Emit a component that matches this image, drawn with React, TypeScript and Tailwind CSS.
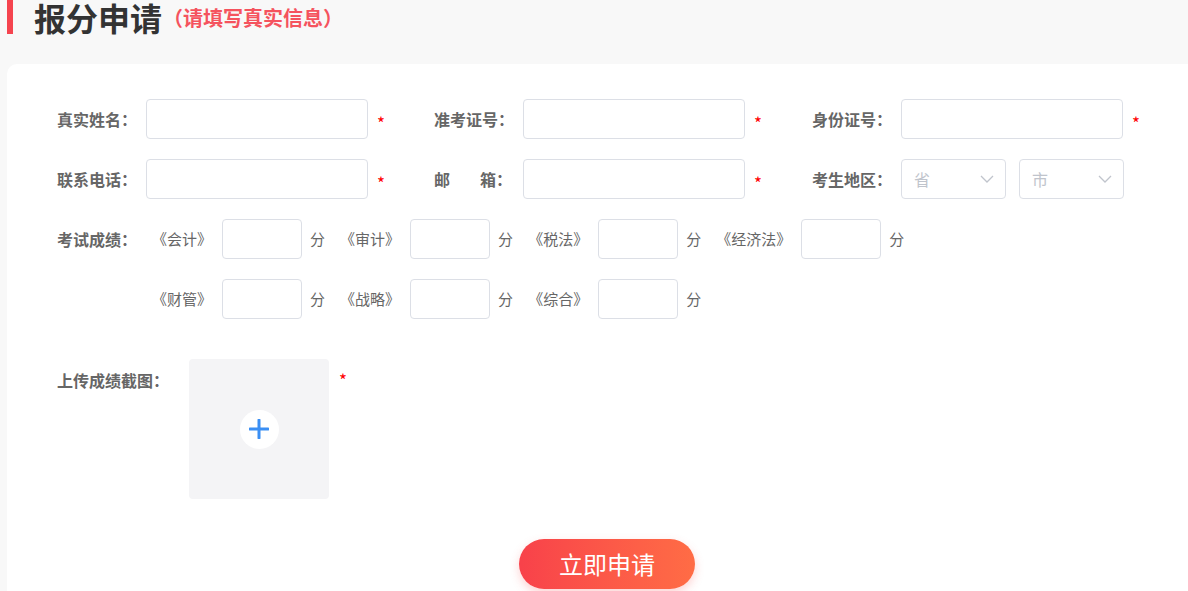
import React from "react";

const font = "font-['Noto_Sans_CJK_SC','Noto_Sans',sans-serif]";

function Label({ children, w = "w-[89px]" }: { children: React.ReactNode; w?: string }) {
  return <div className={`${w} shrink-0 text-[16px] font-bold leading-5 text-[#666]`}>{children}</div>;
}

function Box({ w }: { w: string }) {
  return (
    <input
      className={`${w} h-10 shrink-0 rounded border border-[#dcdfe6] bg-white px-3 text-[14px] outline-none`}
    />
  );
}

function Star({ ml = "ml-[9px]" }: { ml?: string }) {
  return <span className={`${ml} mt-[7px] text-[17px] leading-5 text-[#f00]`}>*</span>;
}

function Chevron() {
  return (
    <svg width="14" height="8" viewBox="0 0 14 8" fill="none">
      <path d="M1 1l6 6 6-6" stroke="#c0c4cc" strokeWidth="1.3" />
    </svg>
  );
}

function Select({ text, ml = "" }: { text: string; ml?: string }) {
  return (
    <div
      className={`${ml} flex h-10 w-[105px] shrink-0 items-center justify-between rounded border border-[#dcdfe6] bg-white pl-[12px] pr-[11px]`}
    >
      <span className="text-[16px] text-[#c0c4cc]">{text}</span>
      <Chevron />
    </div>
  );
}

function Score({ name }: { name: string }) {
  return (
    <div className="flex items-center">
      <span className="mr-[10px] text-[15px] text-[#666]">《{name}》</span>
      <Box w="w-[80px]" />
      <span className="ml-[8px] mr-[15px] text-[15px] text-[#666]">分</span>
    </div>
  );
}

export default function App() {
  return (
    <div className={`${font} h-[591px] w-full overflow-hidden bg-[#f8f8f8]`}>
      <div className="flex h-[34px] items-center pl-[7px]">
        <div className="h-[34px] w-[6px] bg-[#f5444f]" />
        <h1 className="ml-[21px] text-[32px] font-bold leading-[34px] text-[#333]">报分申请</h1>
        <span className="ml-[1px] mt-[2px] text-[20px] font-bold text-[#f5535e]">（请填写真实信息）</span>
      </div>

      <div className="ml-[7px] mt-[30px] w-[1200px] rounded-tl-[10px] rounded-tr-[10px] bg-white pl-[50px] pt-[35px] pb-10">
        <div className="flex flex-col gap-5">
          <div className="flex items-center">
            <div className="flex w-[377px] items-center">
              <Label>真实姓名：</Label>
              <Box w="w-[222px]" />
              <Star />
            </div>
            <div className="flex w-[378px] items-center">
              <Label>准考证号：</Label>
              <Box w="w-[222px]" />
              <Star />
            </div>
            <div className="flex items-center">
              <Label>身份证号：</Label>
              <Box w="w-[222px]" />
              <Star />
            </div>
          </div>

          <div className="flex items-center">
            <div className="flex w-[377px] items-center">
              <Label>联系电话：</Label>
              <Box w="w-[222px]" />
              <Star />
            </div>
            <div className="flex w-[378px] items-center">
              <div className="w-[89px] shrink-0">
                <div className="flex w-[78px] justify-between text-[16px] font-bold leading-5 text-[#666]">
                  <span>邮</span>
                  <span>箱：</span>
                </div>
              </div>
              <Box w="w-[222px]" />
              <Star />
            </div>
            <div className="flex items-center">
              <Label>考生地区：</Label>
              <Select text="省" />
              <Select text="市" ml="ml-[13px]" />
            </div>
          </div>

          <div className="flex items-center">
            <Label w="w-[95px]">考试成绩：</Label>
            <Score name="会计" />
            <Score name="审计" />
            <Score name="税法" />
            <Score name="经济法" />
          </div>

          <div className="flex items-center pl-[95px]">
            <Score name="财管" />
            <Score name="战略" />
            <Score name="综合" />
          </div>
        </div>

        <div className="mt-10 flex items-start">
          <Label w="w-[132px] mt-[11px]">上传成绩截图：</Label>
          <div className="flex h-[140px] w-[140px] shrink-0 items-center justify-center rounded bg-[#f4f4f6]">
            <div className="flex h-[39px] w-[39px] items-center justify-center rounded-full bg-white">
              <svg width="20" height="20" viewBox="0 0 20 20" fill="none">
                <path d="M10 1v18M1 10h18" stroke="#3b8ff4" strokeWidth="3" strokeLinecap="round" />
              </svg>
            </div>
          </div>
          <Star ml="ml-[10px] mt-[11px]" />
        </div>

        <div className="mt-10 flex justify-center pr-[50px]">
          <button className="h-[50px] w-[176px] rounded-full bg-gradient-to-r from-[#f8414a] to-[#ff6c45] text-[24px] text-white shadow-[0_4px_10px_rgba(248,80,80,0.25)]">
            立即申请
          </button>
        </div>
      </div>
    </div>
  );
}
